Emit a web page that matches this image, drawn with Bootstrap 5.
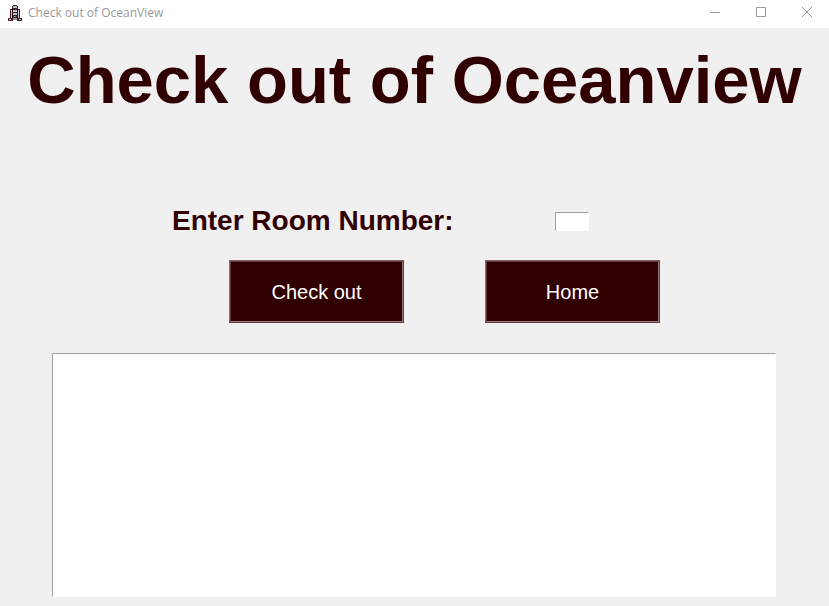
<!DOCTYPE html>
<html lang="en">
<head>
<meta charset="utf-8">
<meta name="viewport" content="width=device-width, initial-scale=1">
<title>Check out of OceanView</title>
<link href="https://cdn.jsdelivr.net/npm/bootstrap@5.3.0/dist/css/bootstrap.min.css" rel="stylesheet">
<style>
body{background:#f0f0f0;color:#300000;font-family:"Liberation Sans",Arial,sans-serif}
.titlebar{height:28px;padding-bottom:3px;font:12px/16px "Open Sans","Noto Sans",sans-serif;color:#999}
.app-icon{margin:0 6px 0 8px}
.win-btn{width:46px;height:24px;color:#999}
h1{font-size:67px;line-height:78px;margin-top:13px}
.room-label{font-size:28px;line-height:32px;margin-right:101px}
.entry-row{margin-top:86px;padding-left:172px}
.sunken{border:1px solid;border-color:#a0a0a0 #fff #fff #a0a0a0;border-radius:0;background:#fff;outline:0}
.room-box{width:34px;height:19px}
.actions{gap:81px;margin-top:23px;padding-left:60px}
.cmd{width:175px;height:63px;background:#300000;color:#fff;font-size:20px;border:1px solid;border-color:#846464 #643c3c #643c3c #846464;box-shadow:inset 1px 1px #643c3c,inset -1px -1px #987878}
.output{margin:30px 53px 9px 52px;resize:none}
</style>
</head>
<body class="d-flex flex-column min-vh-100">
<header class="titlebar d-flex align-items-center bg-white">
<svg class="app-icon" width="14" height="16" viewBox="0 0 14 16" shape-rendering="crispEdges" aria-hidden="true">
<path fill="#45202a" d="M5 0h4v1h1v3h2v9h2v3H9v-3H5v3H0v-3h2V4h2V1h1z"/>
<path fill="#b4c4d3" d="M5 1h4v2H5zM5 5h4v2H5zM5 8h4v2H5z"/>
<path fill="#d0c4ca" d="M3 5h1v8H3zM10 5h1v8h-1zM1 14h2v1H1zM11 14h2v1h-2z"/>
<path fill="#251118" d="M4 4h1v9H4zM9 4h1v9H9z"/>
<path fill="#8496a5" d="M6 11h2v1H6zM5 13h4v2H5z"/>
</svg>
<span class="me-auto">Check out of OceanView</span>
<button class="win-btn border-0 bg-transparent p-0 d-flex align-items-center align-self-start justify-content-center" type="button" aria-label="Minimize"><svg width="12" height="12" viewBox="0 0 12 12"><path d="M2 6.500h10" stroke="currentColor"/></svg></button>
<button class="win-btn border-0 bg-transparent p-0 d-flex align-items-center align-self-start justify-content-center" type="button" aria-label="Maximize"><svg width="12" height="12" viewBox="0 0 12 12"><path d="M2.500 1.500h9v9h-9z" stroke="currentColor" fill="none"/></svg></button>
<button class="win-btn border-0 bg-transparent p-0 d-flex align-items-center align-self-start justify-content-center" type="button" aria-label="Close"><svg width="12" height="12" viewBox="0 0 12 12"><path d="M2 1l10 10M12 1L2 11" stroke="currentColor"/></svg></button>
</header>
<main class="d-flex flex-column flex-grow-1">
<h1 class="fw-bold text-center mb-0">Check out of Oceanview</h1>
<div class="entry-row d-flex align-items-center">
<label class="room-label fw-bold" for="room">Enter Room Number:</label>
<input id="room" class="sunken room-box p-0" type="text">
</div>
<div class="actions d-flex justify-content-center">
<button class="cmd" type="button">Check out</button>
<button class="cmd" type="button">Home</button>
</div>
<textarea class="sunken output flex-grow-1" aria-label="Receipt" readonly></textarea>
</main>
<script src="https://cdn.jsdelivr.net/npm/bootstrap@5.3.0/dist/js/bootstrap.bundle.min.js"></script>
</body>
</html>
